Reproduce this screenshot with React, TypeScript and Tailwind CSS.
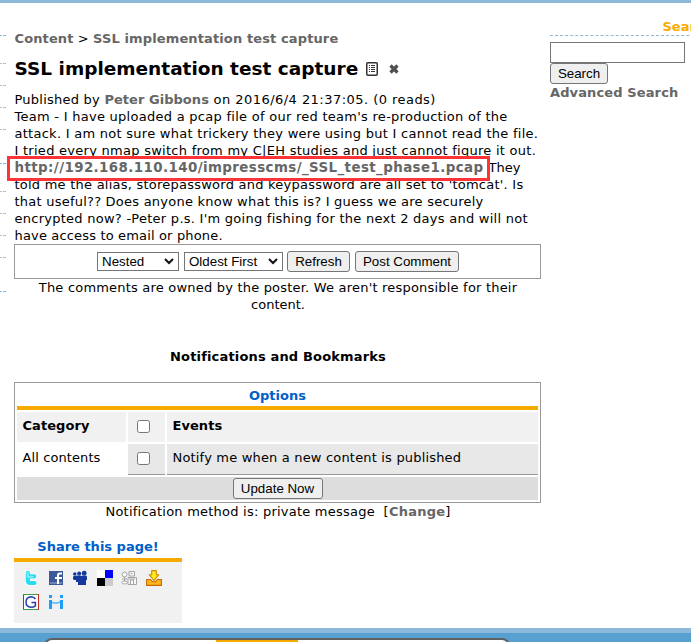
import React from "react";

const body = "font-['Verdana','DejaVu_Sans',sans-serif]";
const ui = "font-['Arial','Liberation_Sans',sans-serif]";

function Line({ className = "", children }: { className?: string; children: React.ReactNode }) {
  return <div className={`h-[17px] whitespace-pre leading-[17px] ${className}`}>{children}</div>;
}

function Link({ className = "", children }: { className?: string; children: React.ReactNode }) {
  return <a className={`font-bold text-[#666] ${className}`}>{children}</a>;
}

function Button({ className = "", children }: { className?: string; children: React.ReactNode }) {
  return (
    <button className={`${ui} h-[21px] shrink-0 whitespace-nowrap rounded-[3px] border border-[#767676] bg-[#efefef] p-0 text-[13.33px] leading-[19px] text-black ${className}`}>
      {children}
    </button>
  );
}

function Select({ className = "", children }: { className?: string; children: React.ReactNode }) {
  return (
    <div className={`${ui} flex h-[19px] items-center justify-between border border-[#767676] bg-white pl-1 pr-1 text-[13.33px] leading-[17px] ${className}`}>
      <span className="whitespace-nowrap">{children}</span>
      <svg width="10" height="7" viewBox="0 0 10 7" fill="none" stroke="#111" strokeWidth="2">
        <path d="M1 1l4 4 4-4" />
      </svg>
    </div>
  );
}

function Check() {
  return <div className="size-[13px] rounded-[2.5px] border border-[#767676] bg-white" />;
}

function Rail() {
  const marks = [35, 63, 85, 107, 129, 163, 191, 213, 235, 257, 291];
  return (
    <svg className="w-[14px] shrink-0" width="14" height="625" shapeRendering="crispEdges">
      {marks.map((y) => (
        <path key={y} d={`M0 ${y - 2.5}h2M3 ${y - 2.5}h3`} stroke={(y - 35) % 128 === 0 ? "#8cb9da" : "#bdbdbd"} />
      ))}
    </svg>
  );
}

function ShareIcons() {
  return (
    <div className="flex h-[61px] w-[168px] flex-col gap-2 bg-[#f1f1f1] pl-[9px] pt-2">
      <div className="flex h-4 gap-[8.6px]">
        <svg width="16" height="16" viewBox="0 0 16 16" fill="none" strokeLinecap="round" strokeLinejoin="round">
          <path d="M4.8 2.8v7.4q0 3 3 3h3.7M5 6.3h6.5" stroke="#fff" strokeWidth="5.6" />
          <path d="M4.8 2.8v7.4q0 2.8 2.8 2.8h3.9M5 6.3h6.3" stroke="#28dcf3" strokeWidth="4.2" />
          <path d="M4.6 2.6v4.2h5" stroke="#7feafa" strokeWidth="2" />
        </svg>
        <svg width="16" height="16" viewBox="0 0 16 16">
          <path d="M1 1h14v14H1z" fill="#3b5998" />
          <path d="M2 12h12v2H2z" fill="#6d84b4" />
          <path d="M9 14V9H7V7h2V5q0-2.5 2.5-2.5H14v2h-2q-1 0-1 1V7h3v2h-3v5z" fill="#fff" />
        </svg>
        <svg width="16" height="16" viewBox="0 0 16 16" fill="#12399b">
          <circle cx="2.8" cy="4" r="1.8" /><circle cx="7.2" cy="3.6" r="2" /><circle cx="12.2" cy="3.2" r="2.4" />
          <path d="M1 9V7.2Q1 6 2.3 6h1.5q.5-.5 1.5-.5h3q.8 0 1 .4.5-.4 1.2-.4h3.2Q15 5.7 15 7v3h-1v5H6v-3H4v-2H2z" />
        </svg>
        <svg width="16" height="16" viewBox="0 0 16 16" shapeRendering="crispEdges">
          <path d="M0 0h8v8H0z" fill="#fff" /><path d="M8 0h8v8H8z" fill="#00f" />
          <path d="M0 8h8v8H0z" fill="#000" /><path d="M8 8h8v8H8z" fill="#ccc" />
        </svg>
        <svg width="16" height="16" viewBox="0 0 16 16" fill="#f8f8f8" stroke="#a5a5a5">
          <circle cx="3.5" cy="4.5" r="2.5" /><path d="M3.5 7v4M1 9h5" />
          <ellipse cx="3.5" cy="12.5" rx="2.8" ry="1.5" />
          <path d="M8 1.5h5.5V6H8zM7 7.5h8.5v7H7zM9.5 3.5h2M9.5 14v-4h3v4M8 9h6" />
        </svg>
        <svg width="16" height="16" viewBox="0 0 16 16" strokeLinejoin="round">
          <path d="M.6 9.5h3.9l2 2.2h3l2-2.2h3.9v5.9H.6z" fill="#ffb51b" stroke="#c46a00" strokeWidth="1.1" />
          <path d="M5.7.6h4.6v4.2h2.4L8 10.5 3.3 4.8h2.4z" fill="#ffed19" stroke="#d08a00" strokeWidth="1.1" />
        </svg>
      </div>
      <div className="flex h-4 gap-[9px]">
        <svg width="16" height="16" viewBox="0 0 16 16" fill="none">
          <path d="M1 1h14v14H1z" fill="#fff" />
          <path d="M.5 15V.5" stroke="#2853c5" /><path d="M0 .5h15" stroke="#3a9f43" />
          <path d="M15.5 0v16" stroke="#c62b20" /><path d="M0 15.5h15" stroke="#35a343" />
          <path d="M12.4 5Q11 2.7 8.3 2.7 3 3 3 8t5 5.2q2.7 0 4.4-1.4V8.4H8.5" stroke="#263fae" strokeWidth="1.5" />
        </svg>
        <svg width="16" height="16" viewBox="0 0 16 16" fill="#1c9dfa">
          <path d="M1 1h3v3H1zM12 1h3v3h-3zM1 6h3v9H1zM12 6h3v9h-3z" />
          <path d="M4 8q1 1 2.3 1h3.4Q11 9 12 7.5" fill="none" stroke="#55b6fb" strokeWidth="1.4" />
        </svg>
      </div>
    </div>
  );
}

function Options() {
  return (
    <div className="flex h-[121px] w-[527px] flex-col gap-[2px] border border-[#999] p-[2px]">
      <div className="h-[25px] border-b-4 border-[#f7ab00] pt-[2px] text-center font-bold leading-[17px] text-[#0060c8]">
        Options
      </div>
      <div className="grid h-[30px] grid-cols-[109px_37px_371px] gap-[2px]">
        <div className="bg-[#f1f1f1] pl-[5.5px] pt-[5px] font-bold leading-[17px] tracking-[0.06px]">Category</div>
        <div className="bg-[#f1f1f1] pl-[9px] pt-2"><Check /></div>
        <div className="bg-[#f1f1f1] pl-[5.5px] pt-[5px] font-bold leading-[17px] tracking-[0.06px]">Events</div>
      </div>
      <div className="grid h-[31px] grid-cols-[109px_37px_371px] gap-[2px]">
        <div className="pl-[5.5px] pt-[5px] leading-[17px] tracking-[0.1px]">All contents</div>
        <div className="border-b border-[#999] bg-[#e8e8e8] pl-[9px] pt-2"><Check /></div>
        <div className="border-b border-[#999] bg-[#e8e8e8] pl-[5.5px] pt-[5px] leading-[17px] tracking-[0.18px]">Notify me when a new content is published</div>
      </div>
      <div className="flex h-[23px] items-center justify-center bg-[#ddd]">
        <Button className="w-[90px]">Update Now</Button>
      </div>
    </div>
  );
}

export default function App() {
  return (
    <div className={`${body} h-[642px] w-[691px] overflow-hidden bg-white text-[13px] text-black`}>
      <div className="h-[3px] bg-[#8cb9da]" />
      <div className="flex h-[625px]">
        <Rail />
        <main className="w-[527px] shrink-0 pt-[27px]">
          <Line className="pl-[0.5px] tracking-[0.12px]"><Link>Content</Link> &gt; <Link>SSL implementation test capture</Link></Line>
          <div className="mt-[10px] flex h-[24px] items-center">
            <h1 className="w-[352px] whitespace-nowrap pl-[0.5px] text-[18.5px] font-bold leading-6">SSL implementation test capture</h1>
            <svg width="12" height="14" viewBox="0 0 12 14">
              <rect x=".75" y=".75" width="10.5" height="12.5" rx="1" fill="#fff" stroke="#333" strokeWidth="1.5" />
              <path d="M3 3.5h1M3 5.5h1M3 7.5h1M3 9.5h1M5 3.5h4M5 5.5h4M5 7.5h4M5 9.5h4" stroke="#333" />
            </svg>
            <svg className="ml-[11px]" width="10" height="10" viewBox="0 0 10 10">
              <path d="M1.5 1.5l7 7M8.5 1.5l-7 7" stroke="#505050" strokeWidth="3.2" />
            </svg>
          </div>
          <div className="mt-[10px] pl-[0.5px]">
            <Line className="tracking-[0.46px]"><span className="tracking-[0.24px]">Published by </span><Link className="tracking-[0.04px]">Peter Gibbons</Link> on 2016/6/4 21:37:05. (0 reads)</Line>
            <Line className="tracking-[0.27px]">Team - I have uploaded a pcap file of our red team's re-production of the</Line>
            <Line className="tracking-[0.27px]">attack. I am not sure what trickery they were using but I cannot read the file.</Line>
            <Line className="tracking-[0.27px]">I tried every nmap switch from my C|EH studies and just cannot figure it out.</Line>
            <Line className="relative">
              <Link className="text-[13.4px] tracking-[0.41px]">http://192.168.110.140/impresscms/_SSL_test_phase1.pcap</Link><span className="pl-px"> They</span>
              <span className="absolute left-[-7.5px] top-[-3px] z-10 h-[25px] w-[483px] border-[3px] border-[#fc3337]" />
            </Line>
            <Line className="tracking-[0.235px]">told me the alias, storepassword and keypassword are all set to 'tomcat'. Is</Line>
            <Line className="tracking-[0.23px]">that useful?? Does anyone know what this is? I guess we are securely</Line>
            <Line className="tracking-[0.26px]">encrypted now? -Peter p.s. I'm going fishing for the next 2 days and will not</Line>
            <Line className="tracking-[0.16px]">have access to email or phone.</Line>
          </div>
          <div className="flex h-[35px] items-center border border-[#999] pl-[82px]">
            <Select className="w-[82px]">Nested</Select>
            <Select className="ml-[5px] w-[99px]">Oldest First</Select>
            <Button className="ml-1 w-[63px]">Refresh</Button>
            <Button className="ml-[5px] w-[104px]">Post Comment</Button>
          </div>
          <div className="flex flex-col items-center">
            <Line className="pl-px tracking-[0.2px]">The comments are owned by the poster. We aren't responsible for their</Line>
            <Line className="pl-px">content.</Line>
            <Line className="mb-[17px] mt-[35px] pl-px font-bold tracking-[0.16px]">Notifications and Bookmarks</Line>
            <Options />
            <Line className="pl-px tracking-[0.23px]">Notification method is: private message  [<Link>Change</Link>]</Line>
          </div>
          <div className="mt-[18px] w-[168px]">
            <Line className="mb-[3px] text-center font-bold text-[#0060c8]">Share this page!</Line>
            <div className="h-1 bg-[#f7ab00]" />
            <ShareIcons />
          </div>
        </main>
        <aside className="ml-[9px] w-[141px] shrink-0 overflow-hidden pt-[15px]">
          <div className="h-[18px] w-[200px] border-b border-dashed border-[#8cb9da] pl-[112.5px] font-bold leading-[17px] text-[#f7ab00]">Search</div>
          <div className="mt-[6px] h-[21px] w-[135px] border border-[#767676] bg-white" />
          <Button className="block w-[58px]">Search</Button>
          <Line className="tracking-[0.12px]"><Link>Advanced Search</Link></Line>
        </aside>
      </div>
      <footer className="h-[14px] overflow-hidden border-t-[5px] border-[#8cb9da] bg-[#58a0d2] pt-[5px]">
        <div className="ml-[44px] h-[30px] w-[466px] rounded-[8px] border-2 border-[#606060] bg-white">
          <div className="ml-[170px] h-5 w-[82px] bg-[#f7ab00]" />
        </div>
      </footer>
    </div>
  );
}
